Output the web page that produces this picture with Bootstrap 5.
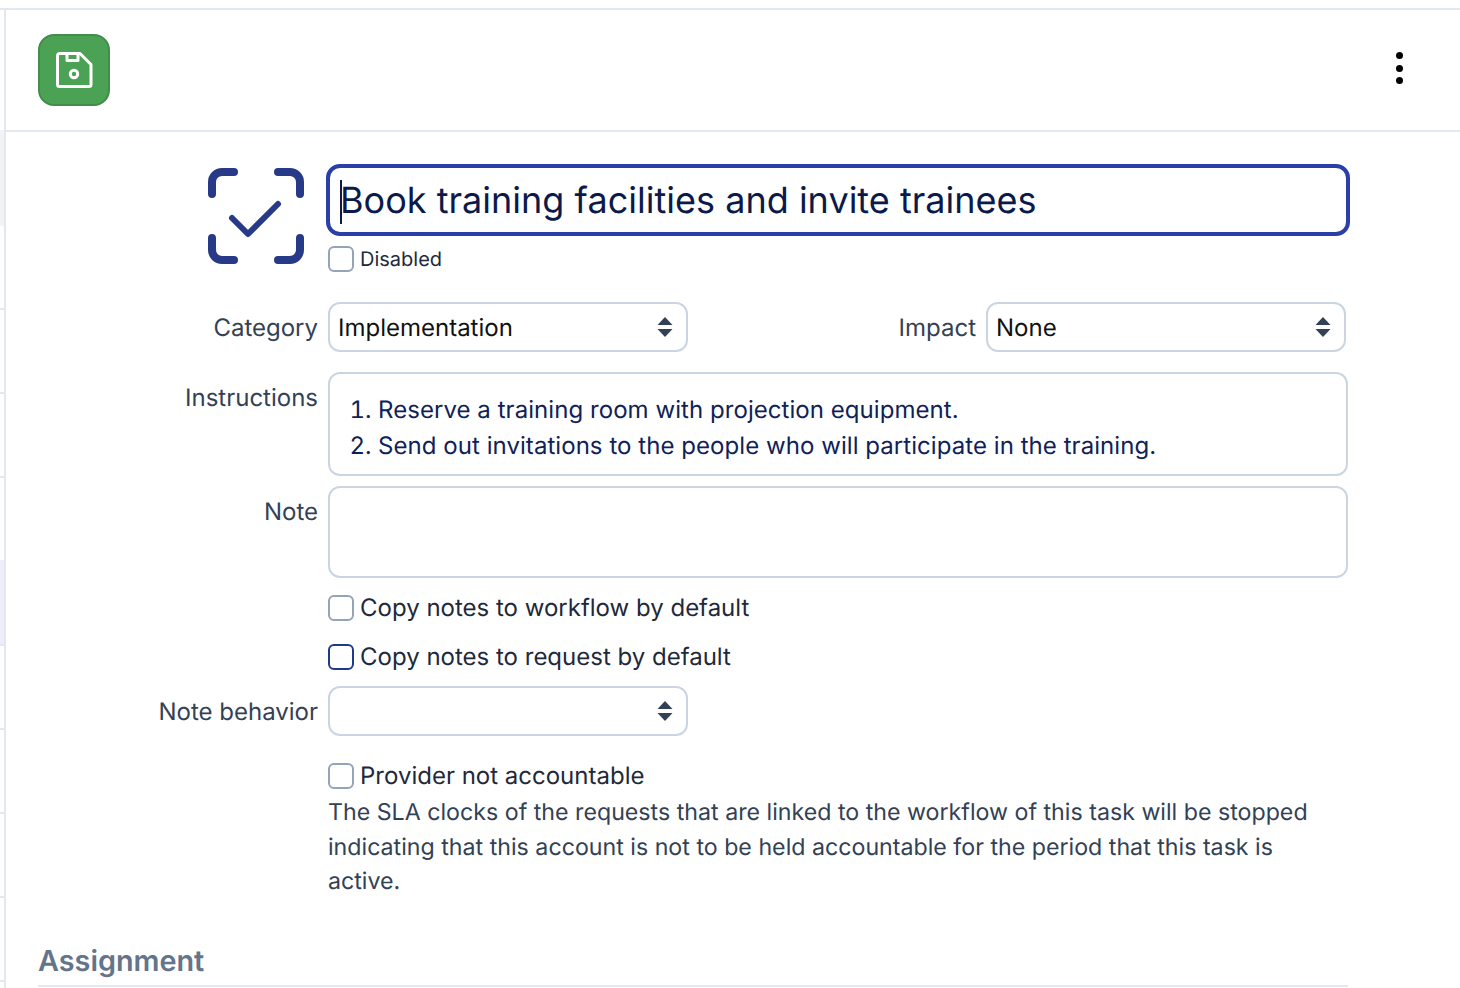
<!DOCTYPE html>
<html lang="en">
<head>
<meta charset="utf-8">
<title>Task template</title>
<link href="https://cdn.jsdelivr.net/npm/bootstrap@5.3.0/dist/css/bootstrap.min.css" rel="stylesheet">
<style>
html,body{height:988px;overflow:hidden;background:#fff}
body{font-family:Inter,"Liberation Sans",sans-serif;font-size:24px;color:#334155;text-rendering:geometricPrecision}
.shell{height:980px;margin-top:8px;border-top:2px solid #e2e8f0}
.strip{width:4px;flex:none;background:linear-gradient(#fff 0,#fff 120px,#f1f3f5 120px,#f1f3f5 216px,#fff 216px,#fff 298px,#e2e8f0 298px,#e2e8f0 300px,#fff 300px,#fff 382px,#e2e8f0 382px,#e2e8f0 384px,#fff 384px,#fff 466px,#e2e8f0 466px,#e2e8f0 468px,#fff 468px,#fff 550px,#eceffb 550px,#eceffb 634px,#e2e8f0 634px,#e2e8f0 636px,#fff 636px,#fff 718px,#e2e8f0 718px,#e2e8f0 720px,#fff 720px,#fff 802px,#e2e8f0 802px,#e2e8f0 804px,#fff 804px,#fff 886px,#e2e8f0 886px,#e2e8f0 888px,#fff 888px,#fff 970px,#e2e8f0 970px,#e2e8f0 972px,#fff 972px)}
.pane{border-left:2px solid #e2e8f0;min-width:0}
.topbar{height:122px;border-bottom:2px solid #e2e8f0;padding:24px 56px 0 32px}
.savebtn{width:72px;height:72px;border-radius:16px;background:#4ba254;border:2px solid #438c4b;padding:0}
.dots{width:8px;margin-top:18px}
.dots i{display:block;width:7px;height:7px;border-radius:50%;background:#000;margin-bottom:5.5px}
.formbody{padding:32px 0 0 32px}
.titlerow{height:138px}
.bigicon{width:96px;height:96px;margin:4px 22px 0 170px;flex:none}
.titlewrap{width:1024px}
.titlebox.form-control{height:72px;width:1024px;border:4px solid #2a3fa8;border-radius:14px;color:#0b1a4a;font-size:36px;letter-spacing:.02px;line-height:64px;padding:0 0 0 10px;white-space:nowrap;position:relative;box-shadow:none}
.caret-mark{position:absolute;left:10px;top:12px;width:2px;height:44px;background:#0b1a4a}
.lbl{width:290px;flex:none;text-align:right;padding-right:10px;color:#334155;line-height:29px}
.lbl.wide{width:298px}
.form-check-input.chk{width:26px;height:26px;border:2px solid #94a3b8;border-radius:6px;flex:none;background-color:#fff;margin:0 6px 0 0;float:none}
.form-check-input.chk.on{border-color:#1e3a8a}
.chkrow{display:flex;align-items:center;color:#1e293b;line-height:29px;height:29px;padding-left:290px}
.chkrow.bare{padding-left:2px;margin-top:8px;font-size:20px}
.bare-text{padding-top:2px}
.form-select.pick{width:360px;height:50px;border:2px solid #cbd5e1;border-radius:12px;padding:0 8px;line-height:48px;font-size:24px;color:#111;background-image:url("data:image/svg+xml,%3Csvg xmlns='http://www.w3.org/2000/svg' viewBox='0 0 16 20'%3E%3Cpath fill='%23334155' d='M8 0l7.5 8H.5zM8 20L.5 12h15z'/%3E%3C/svg%3E");background-size:16px 20px;background-position:right 13px center;font-family:inherit}
.form-control.area{width:1020px;border:2px solid #cbd5e1;border-radius:12px;font-size:24px;color:#0f2257;padding:0}
.area.instr{height:104px;line-height:36px;padding-top:18px;letter-spacing:.055px}
.area.instr ol{margin:0;padding:0 0 0 48px}
.area.note{height:92px}
.gap-r2{margin-top:20px}
.gap-r3{margin-top:10px}
.gap-r4{margin-top:15px}
.gap-r5{margin-top:20px}
.gap-r6{margin-top:15px}
.gap-r7{margin-top:25px}
.instr-lbl{padding-top:11px}
.hint{margin-left:290px;width:1000px;font-size:23.2px;line-height:34.5px;color:#334155;margin-top:5px}
.secthead{font-weight:600;font-size:28.8px;color:#64748b;border-bottom:2px solid #e2e8f0;height:45px;width:1310px;line-height:38px;margin-top:43px}
</style>
</head>
<body>
<div class="shell d-flex">
  <div class="strip"></div>
  <div class="pane flex-grow-1">
    <div class="topbar d-flex justify-content-between align-items-start">
      <button class="savebtn d-flex align-items-center justify-content-center" type="button" aria-label="Save">
        <svg width="38" height="38" viewBox="0 0 38 38" fill="none" stroke="#fff" stroke-width="3" stroke-linejoin="round"><path d="M4.500 2.500h20.500l11 11V33.500a2 2 0 0 1-2 2H4.500a2 2 0 0 1-2-2V4.500a2 2 0 0 1 2-2z"/><path d="M12 2.500v7h11v-7"/><circle cx="19" cy="23" r="3.700"/></svg>
      </button>
      <div class="dots"><i></i><i></i><i></i></div>
    </div>
    <div class="formbody">
      <div class="titlerow d-flex">
        <svg class="bigicon" viewBox="0 0 96 96" fill="none" stroke="#273a87" stroke-width="8" stroke-linecap="round" stroke-linejoin="round"><path d="M4 26V14A10 10 0 0 1 14 4h12"/><path d="M70 4h12a10 10 0 0 1 10 10v12"/><path d="M4 70v12a10 10 0 0 0 10 10h12"/><path d="M92 70v12a10 10 0 0 1-10 10H70"/><path stroke-width="6" d="M24 50l16 16 30-30"/></svg>
        <div class="titlewrap">
          <div class="titlebox form-control"><span class="caret-mark"></span>Book training facilities and invite trainees</div>
          <label class="chkrow bare"><input class="form-check-input chk" type="checkbox"><span class="bare-text">Disabled</span></label>
        </div>
      </div>
      <div class="d-flex align-items-center">
        <div class="lbl">Category</div>
        <div class="form-select pick">Implementation</div>
        <div class="lbl wide">Impact</div>
        <div class="form-select pick">None</div>
      </div>
      <div class="d-flex gap-r2">
        <div class="lbl instr-lbl">Instructions</div>
        <div class="form-control area instr"><ol><li>Reserve a training room with projection equipment.</li><li>Send out invitations to the people who will participate in the training.</li></ol></div>
      </div>
      <div class="d-flex gap-r3">
        <div class="lbl instr-lbl">Note</div>
        <div class="form-control area note"></div>
      </div>
      <label class="chkrow gap-r4"><input class="form-check-input chk" type="checkbox">Copy notes to workflow by default</label>
      <label class="chkrow gap-r5"><input class="form-check-input chk on" type="checkbox">Copy notes to request by default</label>
      <div class="d-flex align-items-center gap-r6">
        <div class="lbl">Note behavior</div>
        <div class="form-select pick"></div>
      </div>
      <label class="chkrow gap-r7"><input class="form-check-input chk" type="checkbox">Provider not accountable</label>
      <div class="hint">The SLA clocks of the requests that are linked to the workflow of this task will be stopped indicating that this account is not to be held accountable for the period that this task is active.</div>
      <div class="secthead">Assignment</div>
    </div>
  </div>
</div>
</body>
</html>
